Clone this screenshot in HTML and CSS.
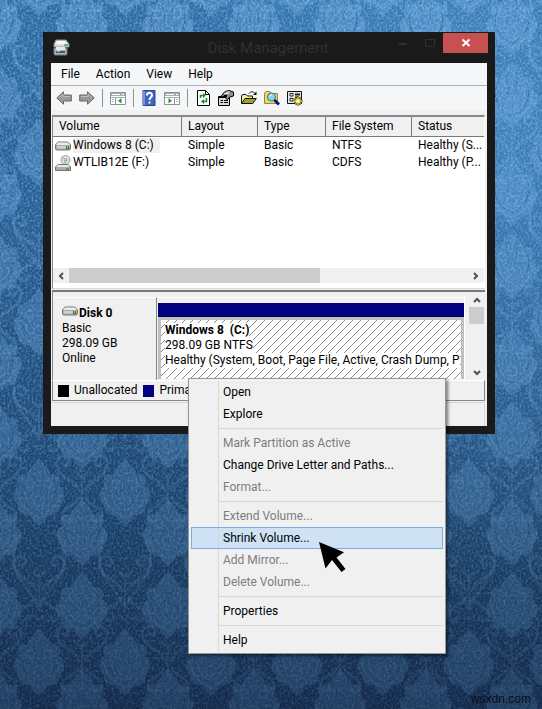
FILE: index.html
```
<!DOCTYPE html>
<html lang="en">
<head>
<meta charset="utf-8">
<title>Disk Management</title>
<link rel="stylesheet" href="styles.css">
</head>
<body>
<svg class="wallpaper" aria-hidden="true">
  <defs>
    <linearGradient id="shade" x1="0" y1="0" x2="0" y2="1">
      <stop offset="0" stop-color="#2b6ba4"/>
      <stop offset=".3" stop-color="#265e95"/>
      <stop offset=".6" stop-color="#1d4a79"/>
      <stop offset=".8" stop-color="#17395f"/>
      <stop offset="1" stop-color="#12294a"/>
    </linearGradient>
    <radialGradient id="glow" cx=".9" cy=".2" r=".65">
      <stop offset="0" stop-color="#5cacf0" stop-opacity=".4"/>
      <stop offset="1" stop-color="#5cacf0" stop-opacity="0"/>
    </radialGradient>
    <linearGradient id="fade" x1="0" y1="0" x2="0" y2="1">
      <stop offset="0" stop-color="#fff" stop-opacity="1"/>
      <stop offset=".55" stop-color="#fff" stop-opacity=".7"/>
      <stop offset="1" stop-color="#fff" stop-opacity=".36"/>
    </linearGradient>
    <mask id="fademask"><rect width="100%" height="100%" fill="url(#fade)"/></mask>
    <filter id="grain" x="0" y="0" width="100%" height="100%">
      <feTurbulence type="fractalNoise" baseFrequency=".5 .4" numOctaves="2" seed="4"/>
      <feColorMatrix values="0 0 0 0 .42  0 0 0 0 .66  0 0 0 0 .9  1.2 0 0 0 -.48"/>
    </filter>
    <g id="medal">
      <path d="M0-46C-5-38-10-36-12-29C-20-32-24-24-20-18C-27-14-27-4-21 1C-22 9-13 13-9 11C-7 17-3 19 0 22C3 19 7 17 9 11C13 13 22 9 21 1C27-4 27-14 20-18C24-24 20-32 12-29C10-36 5-38 0-46Z" fill="#6aa6dc" fill-opacity=".4"/>
      <g fill="none" stroke="#8fc0ec" stroke-opacity=".2" stroke-width="2">
        <path d="M-21-12C-20 0-12 8 0 14C12 8 20 0 21-12M-13-10C-13-1-7 5 0 6C7 5 13-1 13-10"/>
        <circle cy="-3" r="5"/><circle cx="-9" cy="-20" r="4"/><circle cx="9" cy="-20" r="4"/>
      </g>
      <g fill="none" stroke="#0b345f" stroke-opacity=".25" stroke-width="1">
        <path d="M-3-36C-9-28-1-22-5-12M3-36C9-28 1-22 5-12M-17-14C-16-2-9 4 0 9C9 4 16-2 17-14M-12-27C-19-20-18-8-12-1M12-27C19-20 18-8 12-1"/>
      </g>
    </g>
    <g id="scroll" fill="none" stroke="#7db4e6" stroke-opacity=".26" stroke-width="3" stroke-linecap="round">
      <path d="M3 28C8 16 22 18 25 4C27-4 18-9 14-3C11 2 17 6 19 2M-3 28C-8 16-22 18-25 4C-27-4-18-9-14-3C-11 2-17 6-19 2"/>
      <path d="M4 36C8 46 20 44 20 54C19 61 10 60 11 54M-4 36C-8 46-20 44-20 54C-19 61-10 60-11 54"/>
      <path d="M0 12V44M-6 10L0 16L6 10M-5 54L0 58L5 54" stroke-width="2"/>
    </g>
    <pattern id="damask" patternUnits="userSpaceOnUse" width="86" height="170" x="-4" y="22">
      <use href="#medal" x="0" y="85"/><use href="#medal" x="86" y="85"/>
      <use href="#medal" x="43" y="142"/><use href="#medal" x="43" y="-28"/>
      <use href="#medal" x="0" y="12"/><use href="#medal" x="86" y="12"/><use href="#medal" x="0" y="182"/><use href="#medal" x="86" y="182"/>
      <use href="#scroll" x="0" y="100"/><use href="#scroll" x="86" y="100"/>
      <use href="#scroll" x="43" y="30"/>
      <path d="M43-20C22-2 10 24 22 44S40 66 43 78C46 66 52 62 64 44S64-2 43-20" fill="none" stroke="#7db4e6" stroke-opacity=".2" stroke-width="3"/>
    </pattern>
  </defs>
  <rect width="100%" height="100%" fill="url(#shade)"/>
  <rect width="100%" height="100%" fill="url(#glow)"/>
  <g mask="url(#fademask)">
    <rect width="100%" height="100%" fill="url(#damask)"/>
    <rect width="100%" height="100%" filter="url(#grain)"/>
  </g>
</svg>

<svg class="defs" aria-hidden="true">
  <symbol id="drive" viewBox="0 0 16 10">
    <path d="M3 1H13L15.500 4V7.500Q15.500 9 14 9H2Q.5 9 .5 7.500V4Z" fill="#a9aaab" stroke="#737577"/>
    <path d="M3 1.500H13L15 4H1Z" fill="#e9eaea"/>
    <path d="M2 5H14V7.500H2Z" fill="#cfd0d0"/>
    <path d="M11 5H14V8H11Z" fill="#46704c"/><path d="M12 5H13V7H12Z" fill="#7fe089"/>
  </symbol>
</svg>

<main class="desktop">
  <section class="window" aria-label="Disk Management">
    <header class="titlebar">
      <svg class="app-icon" viewBox="0 0 17 17" aria-hidden="true">
        <path d="M3 1H13L16 5V8H1V5Z" fill="#d9dcd9" stroke="#8d9190"/>
        <path d="M4 2H12L14 5H3Z" fill="#f7f7f3"/>
        <path d="M11 5H15V7H11Z" fill="#69b56c"/>
        <path d="M1 9H14V15Q14 16 13 16H2Q1 16 1 15Z" fill="#a7b3b8" stroke="#6c7a80"/>
        <path d="M3 8H12V11H3Z" fill="#e6eaea"/><path d="M3 13H12" stroke="#4b5b62" stroke-width="2"/><path d="M4 12H7" stroke="#e2efef"/>
      </svg>
      <h1>Disk Management</h1>
      <div class="controls">
        <button class="ctl" aria-label="Minimize"><svg viewBox="0 0 12 12"><path d="M2 7H10" stroke="#303030" stroke-width="2"/></svg></button>
        <button class="ctl" aria-label="Maximize"><svg viewBox="0 0 12 12"><path d="M1.500 2.500H10.500V9.500H1.500Z" fill="none" stroke="#303030"/></svg></button>
        <button class="ctl close" aria-label="Close"><svg viewBox="0 0 12 12"><path d="M2.500 2.500L9.500 9M9.500 2.500L2.500 9" stroke="#fff" stroke-width="2"/></svg></button>
      </div>
    </header>

    <div class="client">
      <nav class="menubar">
        <button>File</button><button>Action</button><button>View</button><button>Help</button>
      </nav>
      <div class="toolbar" role="toolbar">
        <button aria-label="Back"><svg viewBox="0 0 16 16"><path d="M.8 8L7.500 1.800V5H15.300V11H7.500V14.200Z" fill="#999" stroke="#666"/><path d="M3 7.500L7 4V6.500H14" fill="none" stroke="#bdbdbd"/></svg></button>
        <button aria-label="Forward"><svg viewBox="0 0 16 16"><path d="M15.200 8L8.500 1.800V5H.7V11H8.500V14.200Z" fill="#999" stroke="#666"/><path d="M2 6.500H9V4L13 7.500" fill="none" stroke="#bdbdbd"/></svg></button>
        <span class="divider"></span>
        <button aria-label="Show console tree"><svg viewBox="0 0 16 16"><path d="M.5 2.500H15.500V14.500H.5Z" fill="#fff" stroke="#8a949b"/><path d="M1 3H15V6H1Z" fill="#a3adb3"/><path d="M2 4.500H10M12 4.500H14" stroke="#fff"/><path d="M1 7.500H15" stroke="#a3adb3"/><path d="M5.500 8V14" stroke="#8a949b"/><path d="M2 9.500H4M2 11.500H4" stroke="#9ba"/><path d="M11.500 8V13.500L8 10.800Z" fill="#289428"/></svg></button>
        <span class="divider"></span>
        <button aria-label="Help topics"><svg viewBox="0 0 16 16"><path d="M2 .5H14V15.500H2Z" fill="#4264bd" stroke="#2a428d"/><path d="M3 1V15" stroke="#7794dc" stroke-width="2"/><path d="M6 5.500C6 2 11 2 11 5.200C11 7.200 8.500 7.500 8.500 10" fill="none" stroke="#fff" stroke-width="2"/><path d="M7.500 11.500H9.500V13.500H7.500Z" fill="#fff"/></svg></button>
        <button aria-label="Show action pane"><svg viewBox="0 0 16 16"><path d="M.5 2.500H15.500V14.500H.5Z" fill="#fff" stroke="#8a949b"/><path d="M1 3H15V6H1Z" fill="#a3adb3"/><path d="M2 4.500H10M12 4.500H14" stroke="#fff"/><path d="M1 7.500H15" stroke="#a3adb3"/><path d="M10.500 8V14" stroke="#8a949b"/><path d="M12 9.500H14M12 11.500H14" stroke="#9ba"/><path d="M4.500 8V13.500L8 10.800Z" fill="#289428"/></svg></button>
        <span class="divider"></span>
        <button aria-label="Refresh"><svg viewBox="0 0 16 16"><path d="M2.500 .5H10.500L14.500 4.500V15.500H2.500Z" fill="#fff" stroke="#000"/><path d="M10.500 .5V4.500H14.500" fill="none" stroke="#000"/><path d="M5.500 8V5.500H9M11.500 8V11.500H8" fill="none" stroke="#16901e" stroke-width="1.500"/><path d="M8 3L11 5.500L8 8ZM9 9V14L6 11.500Z" fill="#16901e"/></svg></button>
        <button aria-label="Properties"><svg viewBox="0 0 16 16"><path d="M.5 6.500H11.500V15.500H.5Z" fill="#d8d8d8" stroke="#000"/><path d="M1 7.500H11" stroke="#000"/><path d="M2.500 10.500H5M6 10.500H10M2.500 12.500H5M6 12.500H10" stroke="#000"/><path d="M3.500 5.500L7 1.500L11 .5L15.500 2V6L12 7L9.500 9.500L7.500 8L9 5.500H6L4.500 7.500Z" fill="#8c8c8c" stroke="#000"/><path d="M6 3.500H11M8 2H12" stroke="#e9e9e9"/></svg></button>
        <button aria-label="Open"><svg viewBox="0 0 16 16"><path d="M.5 13.500V5.500L2 4.500H5L6.500 6H11.500V8.500" fill="#f4eca0" stroke="#111"/><path d="M.7 13.500L4 8.500H15.300L11.800 13.500Z" fill="#a8a021" stroke="#111"/><path d="M8 3.500C10 1 12.500 1.500 14 3.500" fill="none" stroke="#111"/><path d="M15.500 1.500V5H12Z" fill="#111"/></svg></button>
        <button aria-label="Find"><svg viewBox="0 0 16 16"><path d="M.5 3.500L2 1.500H6L7.500 3.500H13.500V13.500H.5Z" fill="#e6d670" stroke="#9b8934"/><circle cx="7.500" cy="7" r="4" fill="#79dde5" stroke="#506f76"/><path d="M5.500 6.500Q6 5 8 4.800" stroke="#fff" fill="none"/><path d="M10.500 10L15 14.500" stroke="#0b1480" stroke-width="3"/></svg></button>
        <button aria-label="Settings"><svg viewBox="0 0 16 16"><path d="M.5 1.500H14.500V13.500H.5Z" fill="#e5e5e5" stroke="#111"/><path d="M3 3.500H6V6H3ZM3 8.500H6V11H3Z" fill="#fff" stroke="#222"/><path d="M8 4.500H13M8 7.500H11" stroke="#222" stroke-width="2"/><path d="M11 6.500V15.500M6.800 11H15.500M8 8L14 14M14 8L8 14" stroke="#423d08" stroke-width="2.600"/><path d="M11 7V15M7 11H15M8.500 8.500L13.500 13.500M13.500 8.500L8.500 13.500" stroke="#e9d943" stroke-width="1.400"/><circle cx="11" cy="11" r="1.500" fill="#fff"/></svg></button>
      </div>

      <div class="volumes">
        <table>
          <colgroup><col class="c-volume"><col class="c-layout"><col class="c-type"><col class="c-fs"><col></colgroup>
          <thead><tr><th>Volume</th><th>Layout</th><th>Type</th><th>File System</th><th>Status</th></tr></thead>
          <tbody>
            <tr><td><span class="vol"><svg class="drive"><use href="#drive"/></svg><span class="picked">Windows 8 (C:)</span></span></td><td>Simple</td><td>Basic</td><td>NTFS</td><td>Healthy (S...</td></tr>
            <tr><td><span class="vol"><svg class="disc" viewBox="0 0 16 16"><circle cx="10.500" cy="5" r="4.500" fill="#dde1df" stroke="#9aa09d"/><circle cx="10.500" cy="5" r="1.300" fill="#fff" stroke="#8a908d"/><path d="M7 2L10 5V9" fill="none" stroke="#91b599"/><path d="M3 9.500H13L15.500 12V15.500H.5V12Z" fill="#a9aaab" stroke="#737577"/><path d="M3 10H13L14.500 12H1.500Z" fill="#e9eaea"/><path d="M11 13H14V15H11Z" fill="#4ba557"/></svg><span>WTLIB12E (F:)</span></span></td><td>Simple</td><td>Basic</td><td>CDFS</td><td>Healthy (P...</td></tr>
          </tbody>
        </table>
        <div class="hscroll">
          <button aria-label="Scroll left"><svg viewBox="0 0 8 8"><path d="M6 1L3 4L6 7" fill="none" stroke="#505050" stroke-width="2"/></svg></button>
          <div class="track"><div class="thumb"></div></div>
          <button aria-label="Scroll right"><svg viewBox="0 0 8 8"><path d="M2 1L5 4L2 7" fill="none" stroke="#505050" stroke-width="2"/></svg></button>
        </div>
      </div>

      <div class="disks">
        <div class="disk-label">
          <strong><svg class="drive"><use href="#drive"/></svg>Disk 0</strong>
          <span>Basic</span><span>298.09 GB</span><span>Online</span>
        </div>
        <div class="disk-graph">
          <div class="stripe"></div>
          <div class="partition">
            <strong>Windows 8&nbsp; (C:)</strong>
            <span>298.09 GB NTFS</span>
            <span>Healthy (System, Boot, Page File, Active, Crash Dump, P</span>
          </div>
        </div>
        <div class="vscroll">
          <button aria-label="Scroll up"><svg viewBox="0 0 8 8"><path d="M1 6L4 3L7 6" fill="none" stroke="#505050" stroke-width="2"/></svg></button>
          <div class="vtrack"><div class="vthumb"></div></div>
          <button aria-label="Scroll down"><svg viewBox="0 0 8 8"><path d="M1 2L4 5L7 2" fill="none" stroke="#505050" stroke-width="2"/></svg></button>
        </div>
      </div>
      <div class="legend">
        <span><i class="swatch"></i>Unallocated</span>
        <span><i class="swatch primary"></i>Prima</span>
      </div>
      <footer class="status"></footer>
    </div>

    <div class="context" role="menu">
      <button role="menuitem">Open</button>
      <button role="menuitem">Explore</button>
      <hr>
      <button role="menuitem" disabled>Mark Partition as Active</button>
      <button role="menuitem">Change Drive Letter and Paths...</button>
      <button role="menuitem" disabled>Format...</button>
      <hr>
      <button role="menuitem" disabled>Extend Volume...</button>
      <button role="menuitem" class="hot">Shrink Volume...</button>
      <button role="menuitem" disabled>Add Mirror...</button>
      <button role="menuitem" disabled>Delete Volume...</button>
      <hr>
      <button role="menuitem">Properties</button>
      <hr>
      <button role="menuitem">Help</button>
      <svg class="cursor" viewBox="0 0 28 32" aria-hidden="true"><path d="M1 1L26 11.300L18.500 16.500L27.500 28L23.500 31L14 19L7.500 27.500Z" fill="#000"/></svg>
    </div>
  </section>
  <span class="watermark">wsxdn.com</span>
</main>
</body>
</html>
```
FILE: styles.css
```
* { box-sizing: border-box; }

body {
  margin: 0;
  background: #1f4f80;
  color: #000;
  font: 12px/15px Roboto, "Noto Sans", sans-serif;
}

button {
  margin: 0;
  padding: 0;
  border: 0;
  background: none;
  color: inherit;
  font: inherit;
}

svg { display: block; }
.defs { position: absolute; width: 0; height: 0; }

.wallpaper {
  position: absolute;
  inset: 0;
  width: 100%;
  height: 100%;
}

.desktop {
  position: relative;
  display: flex;
  flex-direction: column;
  justify-content: space-between;
  min-height: 100vh;
  padding: 32px 47px 0 43px;
}

.window {
  position: relative;
  padding: 0 8px 8px;
  background: #1a1a1b;
}

/* Title bar */
.titlebar {
  display: flex;
  position: relative;
  height: 31px;
  margin-right: -1px;
}
.app-icon { width: 17px; height: 17px; margin: 7px 0 0 2px; }
.titlebar h1 {
  flex: 1;
  margin: 0;
  padding-left: 77px;
  color: #303031;
  font-size: 15px;
  font-weight: 400;
  line-height: 32px;
  text-align: center;
}
.controls { display: flex; align-items: flex-start; margin-top: 1px; }
.ctl { display: grid; place-items: center; width: 27px; height: 20px; }
.ctl svg { width: 12px; height: 12px; }
.ctl.close { width: 45px; background: #c75050; }

/* Menu and toolbar */
.client { background: #f0f0f0; }
.menubar {
  display: flex;
  gap: 16px;
  height: 23px;
  padding: 0 10px;
  border-bottom: 1px solid #b0b1b3;
  background: #f5f6f7;
}
.toolbar {
  display: flex;
  align-items: center;
  gap: 7px;
  height: 24px;
  padding: 0 5px;
  background: #f5f6f7;
}
.toolbar svg { width: 16px; height: 16px; }
.divider { width: 1px; height: 18px; background: #8e9092; }

/* Volume list */
.volumes {
  display: flex;
  flex-direction: column;
  height: 174px;
  margin: 5px 2px 0 1px;
  border: 1px solid #85878a;
  border-top-width: 2px;
  border-right-color: #fff;
  border-bottom-color: #d8d8d8;
  background: #fff;
}
table { width: 100%; border-spacing: 0; table-layout: fixed; }
.c-volume { width: 129px; }
.c-layout { width: 76px; }
.c-type { width: 68px; }
.c-fs { width: 86px; }
th, td { overflow: hidden; padding: 0 6px; text-align: left; white-space: nowrap; }
th {
  height: 20px;
  border-right: 1px solid #77797b;
  border-bottom: 1px solid #77797b;
  background: #f0f0f0;
  font-weight: 400;
}
th:last-child { border-right: 0; }
td { height: 17px; }
td:first-child { padding-left: 2px; }
.vol { display: flex; align-items: center; gap: 2px; }
.drive { width: 16px; height: 10px; }
.disc { width: 16px; height: 16px; }
.picked { padding-right: 6px; background: #f0f0f0; }

.hscroll { display: flex; height: 15px; margin-top: auto; margin-bottom: 5px; background: #f0f0f0; }
.hscroll button, .vscroll button { display: grid; flex: none; place-items: center; width: 16px; height: 15px; }
.hscroll svg, .vscroll svg { width: 8px; height: 8px; }
.track { flex: 1; }
.thumb { width: 63%; height: 100%; background: #cdcdcd; }

/* Graphical view */
.disks {
  display: flex;
  height: 90px;
  margin: 1px 2px 0 1px;
  border-top: 2px solid #77797b;
  border-left: 1px solid #85878a;
}
.disk-label {
  display: flex;
  flex-direction: column;
  width: 104px;
  margin-top: 5px;
  padding: 8px 0 0 9px;
  border-top: 1px solid #fff;
  border-right: 1px solid #85878a;
}
.disk-label strong { display: flex; gap: 1px; }
.disk-graph {
  flex: 1;
  min-width: 0;
  margin: 5px 4px 0 0;
  padding: 5px 0 0 1px;
  border-top: 1px solid #fff;
  border-right: 1px solid #fff;
}
.stripe { height: 14px; border-bottom: 1px solid #00005a; background: #000080; }
.partition {
  display: flex;
  flex-direction: column;
  align-items: flex-start;
  height: 62px;
  padding: 3px 0 0 4px;
  border: 3px solid #c0c0c0;
  border-bottom: 0;
  background: #fff linear-gradient(135deg, transparent 46%, #8b8b8b 46% 54%, transparent 54%) 0 0 / 8px 8px;
}
.partition > * { overflow: hidden; max-width: 100%; background: #fff; white-space: nowrap; }
.vscroll { display: flex; flex-direction: column; width: 16px; background: #f0f0f0; }
.vtrack { flex: 1; }
.vthumb { height: 17px; margin-right: 1px; background: #cdcdcd; }

.legend {
  display: flex;
  gap: 6px;
  align-items: center;
  height: 21px;
  margin: 0 2px 0 1px;
  padding-left: 5px;
  border: 1px solid #85878a;
  border-top: 1px solid #fff;
}
.legend span { display: flex; align-items: center; gap: 5px; }
.swatch { width: 11px; height: 12px; background: #000; }
.swatch.primary { background: #000080; }
.status { height: 24px; margin: 1px 2px 0 0; border-top: 1px solid #d6d6d6; border-right: 1px solid #d6d6d6; }

/* Context menu over the window */
.context {
  position: absolute;
  top: 346px;
  left: 145px;
  width: 258px;
  padding: 2px;
  border: 1px solid #979797;
  background: linear-gradient(#d9d9d9, #d9d9d9) 29px 2px / 1px calc(100% - 4px) no-repeat #f0f0f0;
  box-shadow: 2px 2px 3px rgba(0, 0, 0, .5);
}
.context button {
  display: block;
  width: 100%;
  height: 22px;
  padding-left: 31px;
  border: 1px solid transparent;
  text-align: left;
}
.context button:disabled { color: #7d7d7d; }
.context .hot { border-color: #78aee5; background: rgba(184, 216, 245, .6); }
.context hr { height: 1px; margin: 3px 0 3px 28px; border: 0; background: #d7d7d7; }
.cursor { position: absolute; top: 162px; left: 129px; width: 28px; height: 32px; }

.watermark {
  align-self: flex-end;
  margin-right: -36px;
  color: #0a0f18;
  font: 12px/20px "Liberation Sans", sans-serif;
}
```
